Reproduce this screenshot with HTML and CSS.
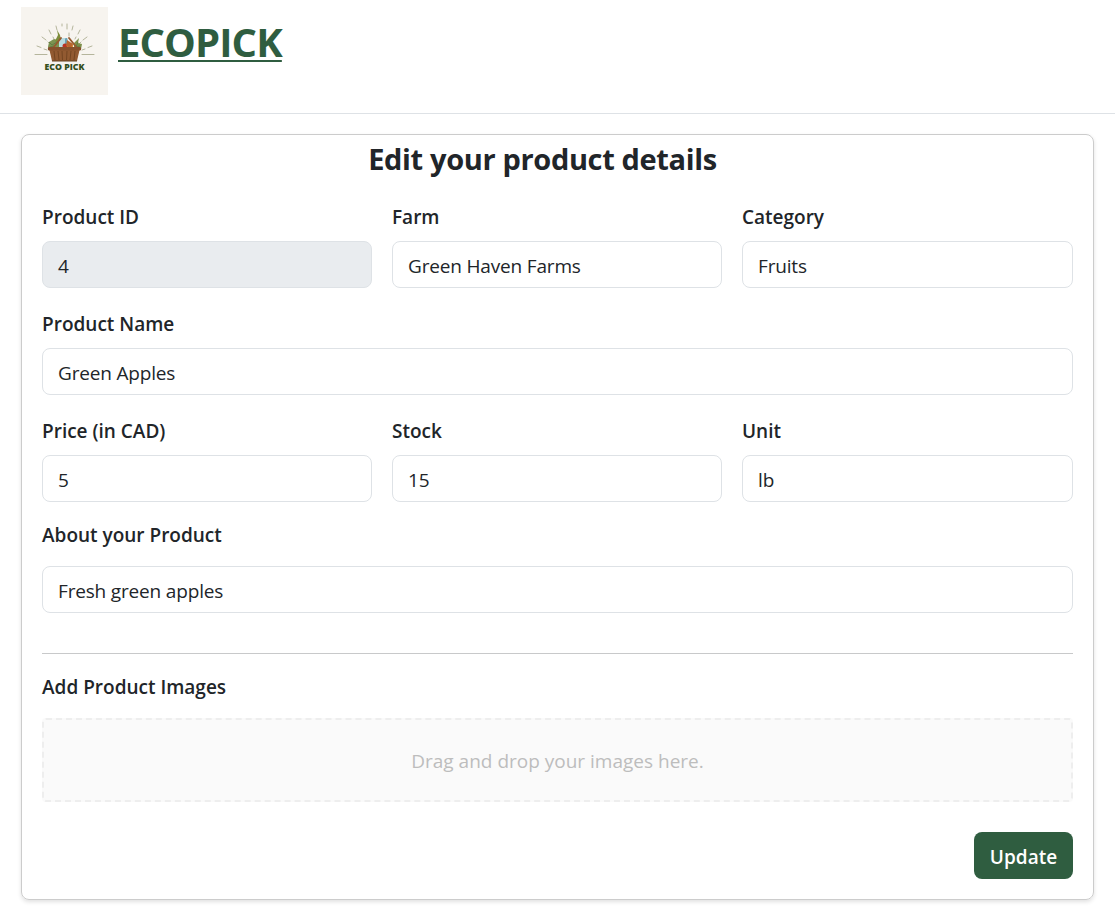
FILE: index.html
```html
<!DOCTYPE html>
<html lang="en">
<head>
<meta charset="utf-8">
<title>Ecopick</title>
<link rel="stylesheet" href="styles.css">
</head>
<body>
<header class="header">
  <svg class="logo" viewBox="0 0 87 88" role="img">
    <rect width="87" height="88" fill="#f7f4ef"/>
    <g stroke="#a3a586" stroke-width=".8" stroke-linecap="round">
      <path d="M14 47.500h12M61 47.500h12"/>
      <path d="M16 39l4 1.500M23 42l3 1M71 39l-4 1.500M64 42l-3 1M21 30l4 3M27 35l2 2M66 30l-4 3M60 35l-2 2M28 23l2 4M32 30l1 2M59 23l-2 4M55 30l-1 2M35 19l1 4M52 19l-1 4M41 17v2M46 17v5M48 26v3"/>
    </g>
    <path d="M27 40l1-5 5-3 4 1 3 7-2 3H28z" fill="#7c9251"/>
    <path d="M34 34l3-6-1-5 3 5 1 5-1 5z" fill="#7d8c3a"/>
    <path d="M53 36l5-5-1 5 4 1-1 5-7 2z" fill="#7d914b"/>
    <path d="M28 35l3 3 5-3M29 40l4-1M57 35l-2 5 4-1" fill="none" stroke="#56763f" stroke-width=".7"/>
    <path d="M38 34l2-3h4l2 4 1 5h-9z" fill="#b9dbe1"/>
    <rect x="44" y="31" width="2.500" height="7" rx="1" fill="#6ba3b6"/>
    <circle cx="44" cy="39" r="2.500" fill="#b93223"/>
    <circle cx="49" cy="39" r="3" fill="#dd8a2b"/>
    <path d="M46 33l6 4-2 4-5-2z" fill="#b8652f"/>
    <path d="M32 41l8-10M56 41l-8-10" fill="none" stroke="#96592f" stroke-width="1.900" stroke-linecap="round"/>
    <path d="M28 41h31l-3 13H31z" fill="#925a31"/>
    <path d="M33 44l1 9M37 44l1 9M41 44l.5 9M46 44l-.5 9M50 44l-1 9M54 44l-1 9" stroke="#70431f" stroke-width=".9"/>
    <rect x="27" y="40" width="33" height="3.500" rx="1.300" fill="#86502c"/>
    <path d="M31 54h25" stroke="#64401f" stroke-width="1"/>
    <text class="logo-text" x="43.500" y="63.200" text-anchor="middle" textLength="40" lengthAdjust="spacingAndGlyphs">ECO PICK</text>
  </svg>
  <a class="brand">ECOPICK</a>
</header>
<main class="card">
  <h1 class="title">Edit your product details</h1>
  <div class="row three">
    <label class="field"><span class="label">Product ID</span><span class="control disabled">4</span></label>
    <label class="field"><span class="label">Farm</span><span class="control">Green Haven Farms</span></label>
    <label class="field"><span class="label">Category</span><span class="control">Fruits</span></label>
  </div>
  <div class="row">
    <label class="field"><span class="label">Product Name</span><span class="control">Green Apples</span></label>
  </div>
  <div class="row three">
    <label class="field"><span class="label">Price (in CAD)</span><span class="control">5</span></label>
    <label class="field"><span class="label">Stock</span><span class="control">15</span></label>
    <label class="field"><span class="label">Unit</span><span class="control">lb</span></label>
  </div>
  <div class="row about">
    <label class="field"><span class="label">About your Product</span><span class="control">Fresh green apples</span></label>
  </div>
  <div class="divider"></div>
  <div class="label images-label">Add Product Images</div>
  <div class="dropzone">Drag and drop your images here.</div>
  <div class="actions"><button class="update">Update</button></div>
</main>
</body>
</html>
```
FILE: styles.css
```css
* { box-sizing: border-box; }
body {
  margin: 0;
  height: 908px;
  overflow: hidden;
  background: #fff;
  color: #212529;
  font: 19px/30px "Open Sans", "Noto Sans", sans-serif;
}
.header {
  display: flex;
  gap: 10px;
  height: 114px;
  padding: 7px 21px 0;
  border-bottom: 1px solid #dee2e6;
}
.logo { width: 87px; height: 88px; flex: none; }
.logo-text { font: 800 9.500px "Open Sans", sans-serif; fill: #344f1d; }
.brand {
  align-self: flex-start;
  margin-top: 5px;
  color: #2f5d40;
  font-size: 40px;
  font-weight: 700;
  letter-spacing: -.9px;
  line-height: 60px;
  text-decoration: underline;
  text-decoration-thickness: 2px;
  text-underline-offset: 3px;
}
.card {
  height: 766px;
  margin: 20px 21px 0;
  padding: 0 20px;
  border: 1px solid #ccc;
  border-radius: 8px;
  box-shadow: 0 2px 4px rgba(0, 0, 0, .12);
}
.title {
  height: 70px;
  margin: 0;
  padding: 5px 30px 0 0;
  font-size: 29px;
  line-height: 38px;
  font-weight: 700;
  letter-spacing: -.35px;
  text-align: center;
}
.row { display: flex; gap: 20px; height: 107px; }
.three { display: grid; grid-template-columns: 330px 330px 1fr; }
.field { flex: 1; display: flex; flex-direction: column; }
.label { height: 36px; line-height: 25px; font-weight: 600; }
.control {
  height: 47px;
  padding: 1px 15px 0;
  border: 1px solid #dee2e6;
  border-radius: 8px;
  line-height: 46px;
  letter-spacing: -.17px;
}
.disabled { background: #e9ecef; }
.about { height: 127px; margin-top: -3px; }
.about .label { height: 43px; }
.divider { height: 1px; margin-top: 3px; background: #c8c9ca; }
.images-label { height: 64px; padding-top: 21px; }
.dropzone {
  height: 84px;
  border: 2px dashed #eee;
  border-radius: 4px;
  background: #fafafa;
  color: #bdbdbd;
  line-height: 82px;
  text-align: center;
}
.actions { display: flex; justify-content: flex-end; margin-top: 30px; }
.update {
  width: 99px;
  height: 47px;
  padding: 3px 0 0;
  border: 0;
  border-radius: 8px;
  background: #2f5d40;
  color: #fff;
  font: 600 19px/44px "Open Sans", sans-serif;
}
```
